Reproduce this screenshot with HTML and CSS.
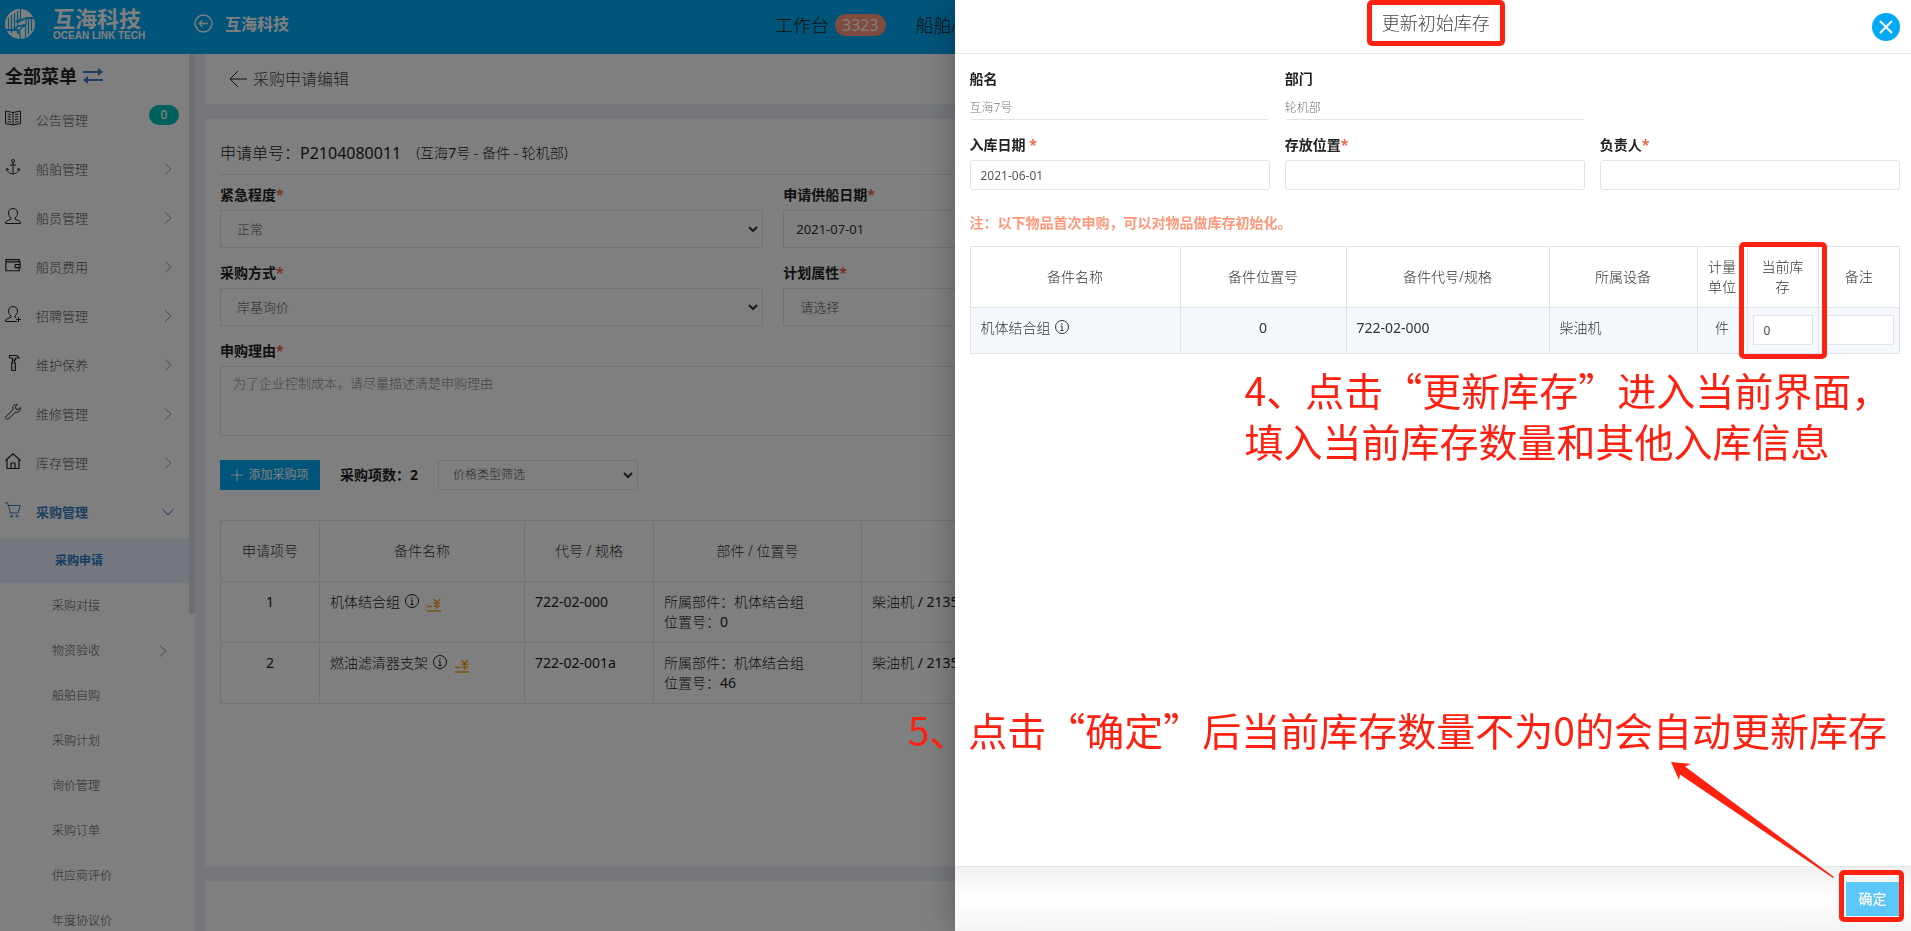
FILE: index.html
```html
<!DOCTYPE html>
<html lang="zh-CN">
<head>
<meta charset="utf-8">
<title>采购申请编辑</title>
<link rel="stylesheet" href="styles.css">
</head>
<body>
<svg class="sprite" aria-hidden="true">
  <symbol id="chev" viewBox="0 0 16 16"><path d="M5 2.500l6 5.500-6 5.500"/></symbol>
  <symbol id="info" viewBox="0 0 16 16"><circle cx="8" cy="8" r="6.500"/><path d="M8 4.200v1.500M6.600 7H8v4.500M6.400 11.500h3.200"/></symbol>
  <symbol id="down" viewBox="0 0 12 12"><path d="M2 4l4 4 4-4" stroke-width="2"/></symbol>
  <symbol id="price" viewBox="0 0 14 14"><path d="M0 8.500h5M0 13h14M6.500 1l3.200 3.500L13 1M9.700 4.500V11M6.500 5.200h6.500M6.500 8h6.500"/></symbol>
</svg>

<header class="topbar">
  <div class="brand">
    <svg class="brand-mark" viewBox="0 0 30 30"><circle cx="15" cy="15" r="15" fill="#fff"/><g stroke="#03a9f4" fill="none"><path d="M3.500 9v13M6.500 6v18M9.500 4v16M12.500 2v14M15.500 0v10l-5 3" stroke-width="1.200"/><path d="M9 21l4-4 8-1M21 9l-8 4M21 9h8M1 21h12v4" stroke-width="1.800"/><path d="M15 30V20l6-4V9M20.500 16v12M23.500 10v15M26.500 9v13" stroke-width="1.200"/></g></svg>
    <div class="brand-text"><strong>互海科技</strong><span>OCEAN LINK TECH</span></div>
  </div>
  <a class="company" href="#">
    <svg class="i18" viewBox="0 0 18 18"><circle cx="9" cy="9" r="8"/><path d="M13 9H5M8 6L5 9l3 3"/></svg>
    互海科技
  </a>
  <nav class="topnav">
    <a href="#">工作台 <span class="count">3323</span></a>
    <a href="#">船舶A</a>
  </nav>
</header>

<div class="shell">
  <aside class="sidebar">
    <h2 class="menu-title">全部菜单
      <svg class="swap" viewBox="0 0 20 16"><path d="M0 4h17M3 12h17"/><path d="M15 0l5 4-5 4zM5 8l-5 4 5 4z" class="solid"/></svg>
    </h2>
    <nav class="menu">
      <a class="item" href="#"><svg class="ico" viewBox="0 0 16 16"><path d="M.5 1l7.500 1.500L15.500 1v12.500L8 15l-7.500-1.500zM8 2.500V15M2.500 4l3.500.7M2.500 6.500l3.500.7M2.500 9l3.500.7M2.500 11.500l3.500.7M13.500 4l-3.500.7M13.500 6.500l-3.500.7M13.500 9l-3.500.7M13.500 11.500l-3.500.7"/></svg><span>公告管理</span><b class="pill">0</b></a>
      <a class="item" href="#"><svg class="ico" viewBox="0 0 16 16"><circle cx="8" cy="2" r="1.500"/><path d="M8 3.500V15M5 6h6M.8 11.500L2 9.500l2 1.500M15.200 11.500L14 9.500 12 11M2 9.500c0 3 2.500 5 6 5.500 3.500-.5 6-2.500 6-5.500"/></svg><span>船舶管理</span><svg class="chev"><use href="#chev"/></svg></a>
      <a class="item" href="#"><svg class="ico" viewBox="0 0 16 16"><path d="M6 10C4 8.500 3.500 6.500 3.500 5 3.500 2 5.500.5 8 .5S12.500 2 12.500 5c0 1.500-.5 3.500-2.500 5v1.200l4.500 1.800c.8.400 1 1.200 1 2.500H.5c0-1.300.2-2.100 1-2.500L6 11.200z"/></svg><span>船员管理</span><svg class="chev"><use href="#chev"/></svg></a>
      <a class="item" href="#"><svg class="ico" viewBox="0 0 18 16"><path d="M1 4V2h15v3M1 2.500V14.500h15V11M1 4.500h16V11h-5.500V7.500H17" stroke-width="1.300"/></svg><span>船员费用</span><svg class="chev"><use href="#chev"/></svg></a>
      <a class="item" href="#"><svg class="ico" viewBox="0 0 16 16"><path d="M6 10C4 8.500 3.500 6.500 3.500 5 3.500 2 5.500.5 8 .5S12.500 2 12.500 5c0 1.500-.5 3.500-2.500 5v1.200l1 .4M6 10v1.200L1.500 13c-.8.400-1 1.200-1 2.500H12M13.500 11v5M11 13.500h5"/></svg><span>招聘管理</span><svg class="chev"><use href="#chev"/></svg></a>
      <a class="item" href="#"><svg class="ico" viewBox="0 0 16 16"><path d="M4.500.5H12l2 2.500h-3.500v2h-3V3h-3zM7.500 5v3h-.8v7.500h3.600V8h-.8V5" stroke-width="1.200"/></svg><span>维护保养</span><svg class="chev"><use href="#chev"/></svg></a>
      <a class="item" href="#"><svg class="ico" viewBox="0 0 16 16"><path d="M12.500.8C10 0 7 2 8 5.500L1 12.500c-1.200 1.500.8 3.700 2.500 2.500L10.500 8c3.500 1 5.500-2 4.800-4.500L13 5.500l-2-.6-.6-2z"/></svg><span>维修管理</span><svg class="chev"><use href="#chev"/></svg></a>
      <a class="item" href="#"><svg class="ico" viewBox="0 0 16 16"><path d="M.5 7.500L8 .8l7.500 6.700M2 6.500v9h12v-9M6 15.500V10h4v5.500" stroke-width="1.200"/></svg><span>库存管理</span><svg class="chev"><use href="#chev"/></svg></a>
      <a class="item open" href="#"><svg class="ico" viewBox="0 0 16 16"><path d="M0 .8h2.500L5.500 11H13l2.500-7.500h-12"/><circle cx="6.500" cy="14.200" r="1"/><circle cx="12" cy="14.200" r="1"/></svg><span>采购管理</span><svg class="chev" viewBox="0 0 16 16"><path d="M2.500 5L8 11l5.500-6"/></svg></a>
    </nav>
    <nav class="submenu">
      <a class="active" href="#">采购申请</a>
      <a href="#">采购对接</a>
      <a href="#">物资验收<svg class="chev"><use href="#chev"/></svg></a>
      <a href="#">船舶自购</a>
      <a href="#">采购计划</a>
      <a href="#">询价管理</a>
      <a href="#">采购订单</a>
      <a href="#">供应商评价</a>
      <a href="#">年度协议价</a>
    </nav>
    <div class="thumb"></div>
  </aside>

  <main class="main">
    <div class="crumb">
      <svg class="back" viewBox="0 0 18 18"><path d="M18 9H1M9 1L1 9l8 8"/></svg>采购申请编辑
    </div>
    <section class="card">
      <div class="order"><span class="order-no">申请单号：<span class="num">P2104080011</span></span><span>(互海<span class="num">7</span>号 - 备件 - 轮机部)</span></div>
      <div class="form">
        <div class="field"><label for="urgency">紧急程度<i>*</i></label>
          <div class="pick"><select id="urgency"><option>正常</option></select><svg><use href="#down"/></svg></div></div>
        <div class="field"><label for="supply">申请供船日期<i>*</i></label><input id="supply" type="text" value="2021-07-01"></div>
        <div class="field"><label for="mode">采购方式<i>*</i></label>
          <div class="pick"><select id="mode"><option>岸基询价</option></select><svg><use href="#down"/></svg></div></div>
        <div class="field"><label for="plan">计划属性<i>*</i></label>
          <div class="pick"><select id="plan"><option>请选择</option></select></div></div>
        <div class="field wide"><label for="reason">申购理由<i>*</i></label><textarea id="reason" placeholder="为了企业控制成本，请尽量描述清楚申购理由"></textarea></div>
      </div>
      <div class="tools">
        <button class="add" type="button"><svg viewBox="0 0 12 12"><path d="M6 0v12M0 6h12"/></svg>添加采购项</button>
        <strong>采购项数：2</strong>
        <div class="pick small"><select aria-label="价格类型筛选"><option>价格类型筛选</option></select><svg><use href="#down"/></svg></div>
      </div>
      <table class="grid items">
        <colgroup><col class="c1"><col class="c2"><col class="c3"><col class="c4"><col></colgroup>
        <thead><tr><th>申请项号</th><th>备件名称</th><th>代号 / 规格</th><th>部件 / 位置号</th><th></th></tr></thead>
        <tbody>
          <tr><td class="mid num">1</td><td>机体结合组 <svg class="info"><use href="#info"/></svg><svg class="price"><use href="#price"/></svg></td><td class="num">722-02-000</td><td>所属部件：机体结合组<br>位置号：<span class="num">0</span></td><td>柴油机 <span class="num">/ 2135</span></td></tr>
          <tr><td class="mid num">2</td><td>燃油滤清器支架 <svg class="info"><use href="#info"/></svg><svg class="price"><use href="#price"/></svg></td><td class="num">722-02-001a</td><td>所属部件：机体结合组<br>位置号：<span class="num">46</span></td><td>柴油机 <span class="num">/ 2135</span></td></tr>
        </tbody>
      </table>
    </section>
    <div class="actions"></div>
  </main>
</div>

<div class="mask"></div>

<section class="drawer" role="dialog" aria-labelledby="dlg">
  <header class="drawer-head">
    <h1 id="dlg">更新初始库存</h1>
    <button class="close" type="button" aria-label="关闭"><svg viewBox="0 0 14 14"><path d="M1 1l12 12M13 1L1 13"/></svg></button>
  </header>
  <div class="drawer-body">
    <div class="dform">
      <div class="dfield"><label for="ship">船名</label><input id="ship" class="plain" readonly value="互海7号"></div>
      <div class="dfield"><label for="dept">部门</label><input id="dept" class="plain" readonly value="轮机部"></div>
      <div class="dfield first"><label for="date">入库日期 <i>*</i></label><input id="date" type="text" value="2021-06-01"></div>
      <div class="dfield"><label for="place">存放位置<i>*</i></label><input id="place" type="text"></div>
      <div class="dfield"><label for="owner">负责人<i>*</i></label><input id="owner" type="text"></div>
    </div>
    <p class="note">注：以下物品首次申购，可以对物品做库存初始化。</p>
    <div class="stock-wrap">
      <table class="grid stock">
        <colgroup><col class="s1"><col class="s2"><col class="s3"><col class="s4"><col class="s5"><col class="s6"><col class="s7"></colgroup>
        <thead><tr><th>备件名称</th><th>备件位置号</th><th>备件代号/规格</th><th>所属设备</th><th>计量单位</th><th class="pad">当前库存</th><th>备注</th></tr></thead>
        <tbody><tr><td>机体结合组 <svg class="info"><use href="#info"/></svg></td><td class="mid num">0</td><td class="num">722-02-000</td><td>柴油机</td><td class="mid">件</td><td class="edit"><input type="text" aria-label="当前库存" value="0"></td><td class="edit"><input type="text" aria-label="备注"></td></tr></tbody>
      </table>
      <div class="mark mark-stock"></div>
    </div>
  </div>
  <footer class="drawer-foot"><div class="ok-frame"><button class="ok" type="button">确定</button></div></footer>
  <p class="tip tip4">4、点击“更新库存”进入当前界面，<br>填入当前库存数量和其他入库信息</p>
  <p class="tip tip5">5、点击“确定”后当前库存数量不为0的会自动更新库存</p>
  <svg class="arrow" viewBox="0 0 164 118"><path d="M0 0l20 2-6 2.500L163 115l-1 1L9 12.500 8 18z" fill="#ff2010"/></svg>
</section>
</body>
</html>
```
FILE: styles.css
```css
* { box-sizing: border-box; }
body {
  margin: 0;
  height: 100vh;
  display: flex;
  flex-direction: column;
  overflow: hidden;
  background: #eaeff5;
  color: #222;
  font: 300 14px/20px "Noto Sans", "Noto Sans CJK SC", sans-serif;
}
a { color: inherit; text-decoration: none; }
svg { fill: none; stroke: currentColor; }
input, select, textarea, button { font: inherit; color: inherit; border-radius: 0; }
input, select, textarea { width: 100%; border: 1px solid #e0e4e8; background: #fff; outline: 0; }
select { appearance: none; }
strong { font-weight: 700; }
label { display: block; font-weight: 700; }
label i { color: #f0694c; font-style: normal; }
.num { font-weight: 400; color: #222; }
.sprite { position: absolute; width: 0; height: 0; }

/* top bar */
.topbar { flex: none; display: flex; align-items: center; height: 54px; padding-left: 5px; background: #03a9f4; color: #fff; }
.brand { display: flex; gap: 18px; width: 189px; padding-bottom: 6px; align-items: center; }
.brand-mark { width: 30px; height: 30px; stroke: none; }
.brand-text { display: flex; flex-direction: column; }
.brand-text strong { font-size: 22px; line-height: 24px; }
.brand-text span { font: 700 10px/12px "Liberation Sans", sans-serif; }
.company { display: flex; align-items: center; gap: 12px; padding-bottom: 7px; font-size: 16px; font-weight: 700; }
.i18 { width: 19px; height: 19px; stroke-width: 1.3; }
.topnav { display: flex; gap: 30px; margin-left: 486px; padding-bottom: 4px; color: #222; font-size: 18px; }
.topnav a { display: flex; align-items: center; gap: 6px; }
.count { padding: 0 7px; border-radius: 11px; background: #ff9778; color: #fff; font-size: 16px; font-weight: 400; line-height: 22px; }

/* side menu */
.shell { flex: 1; display: flex; min-height: 0; }
.sidebar { position: relative; flex: none; width: 195px; margin-right: 10px; background: #fff; overflow: hidden; }
.thumb { position: absolute; top: 0; right: 0; width: 6px; height: 560px; border-radius: 3px; background: #dcdcdc; }
.menu-title { display: flex; align-items: center; gap: 6px; height: 41px; margin: 0; padding: 3px 0 0 5px; font-size: 18px; }
.swap { width: 20px; height: 16px; color: #3a7cc0; stroke-width: 2; }
.swap .solid { fill: currentColor; stroke: none; }
.menu { padding-bottom: 2px; }
.item { display: flex; align-items: center; height: 49px; padding: 0 19px 0 5px; color: #555; font-size: 13px; }
.item span { flex: 1; margin-left: 15px; }
.ico { width: 16px; height: 16px; color: #222; margin-bottom: 4px; }
.chev { width: 16px; height: 16px; color: #999; }
.pill { width: 30px; margin: 0 -3px 10px 0; border-radius: 10px; background: #00c0b8; color: #fff; font-size: 12px; font-weight: 500; text-align: center; }
.open, .open .ico, .open .chev { color: #3a7cc0; }
.open span, .submenu .active { font-weight: 700; }
.submenu a { display: flex; align-items: center; justify-content: space-between; height: 45px; padding: 0 24px 0 52px; color: #555; font-size: 12px; }
.submenu .active { border-left: 3px solid #e8f0fc; background: #e8f0fc; color: #2878c8; }

/* page */
.main { flex: 1; min-width: 0; display: flex; flex-direction: column; gap: 15px; }
.crumb { flex: none; display: flex; align-items: center; gap: 6px; height: 50px; padding-left: 24px; background: #fff; color: #444; font-size: 16px; }
.back { width: 18px; height: 18px; color: #222; }
.card { flex: 1; padding: 0 21px 0 15px; background: #fff; }
.actions { flex: none; height: 50px; background: #fff; }
.order { display: flex; align-items: center; gap: 15px; height: 56px; padding-top: 12px; border-bottom: 1px solid #e8e8e8; }
.order-no { font-size: 16px; }
.form { display: grid; grid-template-columns: repeat(3, 1fr); column-gap: 20px; padding-top: 10px; row-gap: 15px; }
.field { display: flex; flex-direction: column; gap: 5px; grid-column: 2; }
.field:nth-child(odd) { grid-column: 1; }
.form .wide { grid-column: 1 / -1; }
.field input, .field select { height: 38px; padding: 0 12px; font-size: 13px; color: #333; }
.field input { font-weight: 400; }
.field select { padding: 0 16px; color: #555; }
.field textarea { display: block; height: 70px; padding: 6px 12px; font-size: 13px; resize: none; }
textarea::placeholder { color: #888; }
.pick { display: grid; align-items: center; }
.pick > * { grid-area: 1 / 1; }
.pick svg { justify-self: end; width: 12px; height: 12px; margin-right: 4px; color: #333; pointer-events: none; }
.tools { display: flex; align-items: center; gap: 20px; padding: 24px 0 30px; }
.add { display: flex; align-items: center; justify-content: center; gap: 5px; width: 100px; height: 30px; padding: 0; border: 0; background: #03a9f4; color: #fff; font-size: 12px; font-weight: 400; }
.add svg { width: 12px; height: 12px; }
.small { width: 200px; }
.small select { height: 30px; padding: 0 14px; border-radius: 3px; font-size: 12px; color: #555; }

/* tables */
.grid { width: 100%; table-layout: fixed; border-collapse: collapse; }
.grid th, .grid td { padding: 10px; border: 1px solid #e0e4e8; text-align: left; vertical-align: top; }
.grid th { height: 61px; padding: 0 5px; text-align: center; vertical-align: middle; font-weight: 300; color: #333; }
.items td { height: 61px; }
.grid .mid { padding: 10px 5px; text-align: center; }
.c1 { width: 99px; } .c2 { width: 205px; } .c3 { width: 129px; } .c4 { width: 208px; }
.info { width: 16px; height: 16px; vertical-align: -2px; }
.price { width: 14px; height: 14px; margin-left: 7px; vertical-align: -5px; color: #f5a623; stroke-width: 1.4; }

/* drawer */
.mask { position: fixed; inset: 0; background: rgba(0, 0, 0, .5); }
.drawer { position: fixed; top: 0; right: 0; bottom: 0; left: calc(50% - 1px); display: flex; flex-direction: column; background: #fff; box-shadow: 0 0 30px rgba(0, 0, 0, .3); }
.drawer-head { flex: none; display: grid; grid-template-columns: 1fr auto 1fr; height: 54px; padding: 0 11px 0 17px; border-bottom: 1px solid #e3e5e8; }
.drawer-head h1 { grid-column: 2; height: 46px; margin: 0; padding: 0 10px; border: 5px solid #ff2010; border-radius: 5px; color: #444; font-size: 18px; font-weight: 300; line-height: 36px; }
.close { display: flex; align-items: center; justify-content: center; justify-self: end; align-self: center; width: 28px; height: 28px; padding: 0; border: 0; border-radius: 50%; background: #03a9f4; color: #fff; }
.close svg { width: 14px; height: 14px; stroke-width: 2; }
.drawer-body { flex: 1; padding: 15px 11px 0 15px; }
.dform { display: grid; grid-template-columns: repeat(3, 1fr); gap: 15px; }
.dfield { display: flex; flex-direction: column; gap: 5px; }
.first { grid-column: 1; }
.dfield input { height: 30px; padding: 0 10px; border-radius: 3px; color: #555; font-size: 12px; font-weight: 400; }
.dfield .plain { height: 26px; padding: 0; border-width: 0 0 1px; color: #777; font-weight: 300; }
.note { margin: 23px 0 13px; color: #ff9778; font-weight: 700; }
.stock-wrap { position: relative; }
.stock td { height: 46px; color: #333; }
.stock tbody { background: #f5f9fd; }
.stock .pad { padding: 0 12px; }
.stock .edit { padding: 7px 5px; }
.stock .edit input { display: block; height: 30px; padding: 0 10px; color: #444; font-size: 12px; font-weight: 400; }
.s1 { width: 210px; } .s2 { width: 166px; } .s3 { width: 203px; } .s4 { width: 148px; } .s5 { width: 50px; } .s6 { width: 71px; }
.mark { position: absolute; border: 5px solid #ff2010; border-radius: 5px; }
.mark-stock { top: -4px; bottom: -5px; right: 73px; width: 88px; }
.drawer-foot { flex: none; display: flex; justify-content: flex-end; align-items: flex-start; height: 65px; padding: 3px 7px 0 0; border-top: 1px solid #e3e5e8; background: linear-gradient(#f0f0f0, #fff 50%, #f4f4f4); }
.ok-frame { padding: 7px 0 1px 2px; border: 5px solid #ff2010; border-radius: 5px; }
.ok { display: block; width: 53px; height: 34px; padding: 0; border: 0; background: #5cc6f8; color: #fff; font-size: 14px; font-weight: 500; }

/* callouts drawn over the drawer */
.tip { position: absolute; margin: 0; color: #ff2010; font: 400 39px/51px "Noto Sans CJK SC", sans-serif; white-space: nowrap; }
.tip4 { top: 364px; left: 290px; }
.tip5 { top: 704px; right: 24px; }
.arrow { position: absolute; right: 76px; bottom: 51px; width: 164px; height: 118px; stroke: none; }
```
